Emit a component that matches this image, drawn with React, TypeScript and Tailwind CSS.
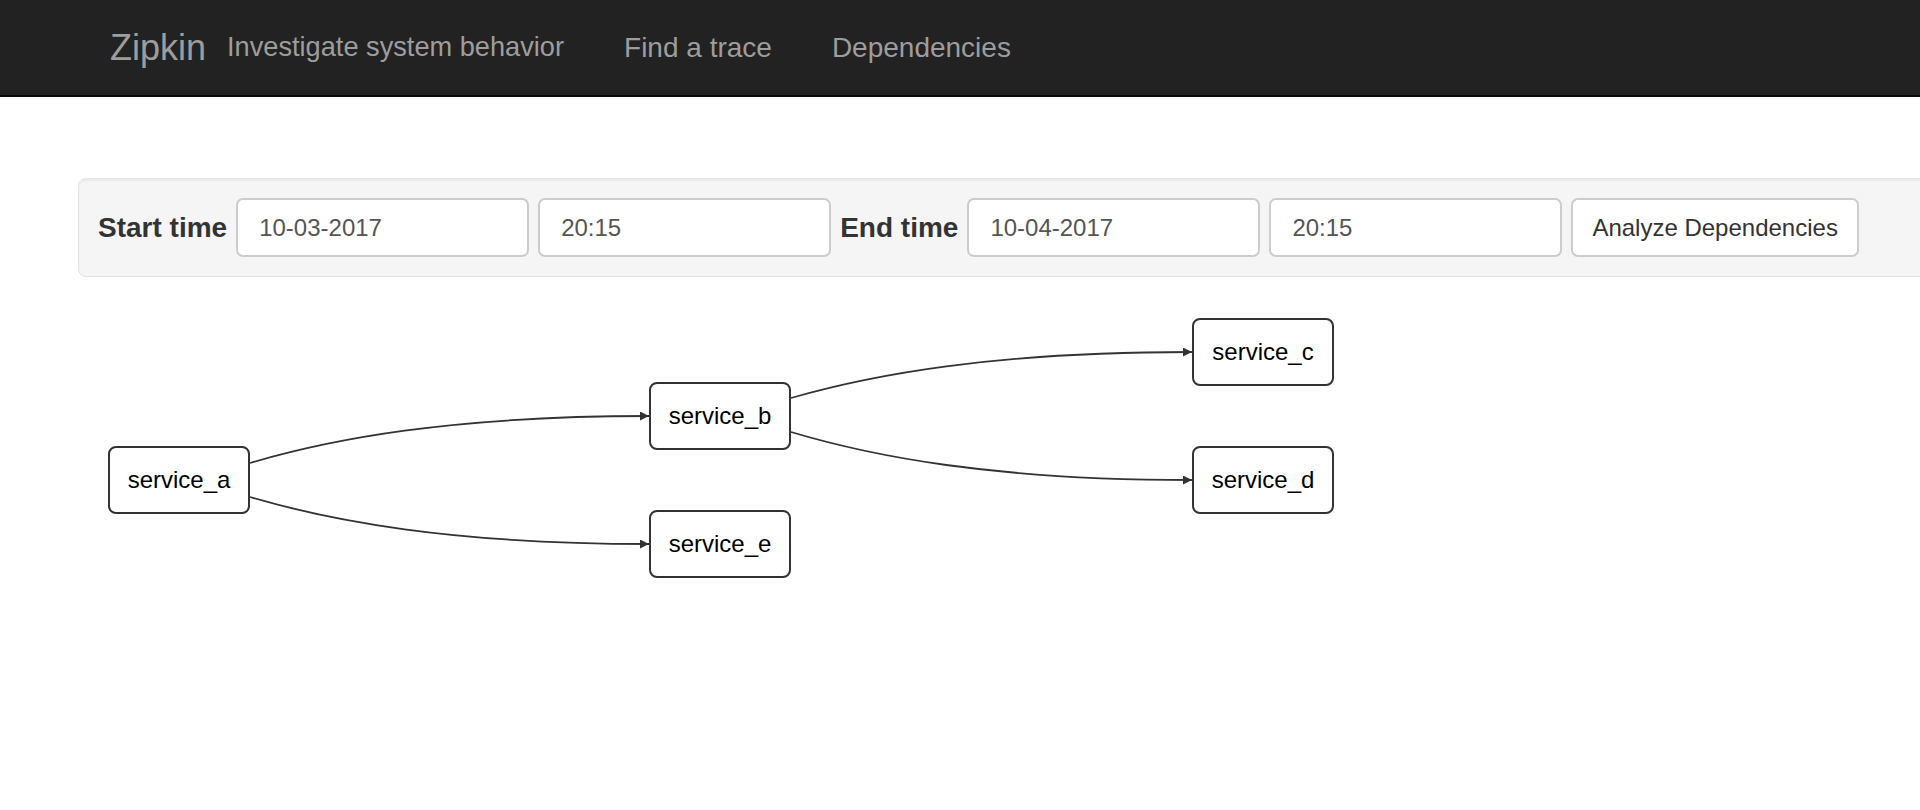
const font = { fontFamily: '"Liberation Sans", Arial, Helvetica, sans-serif' };

type Node = { id: string; x: number; y: number };

// diagram canvas: node boxes are 142x68, coordinates relative to the canvas
const nodes: Node[] = [
  { id: "service_a", x: 108, y: 169 },
  { id: "service_b", x: 649, y: 105 },
  { id: "service_e", x: 649, y: 233 },
  { id: "service_c", x: 1192, y: 41 },
  { id: "service_d", x: 1192, y: 169 },
];

const edges = [
  { x0: 250, y0: 186, x1: 649, y1: 139 },
  { x0: 250, y0: 220, x1: 649, y1: 267 },
  { x0: 791, y0: 121, x1: 1192, y1: 75 },
  { x0: 791, y0: 155, x1: 1192, y1: 203 },
];

function edgePath(e: { x0: number; y0: number; x1: number; y1: number }) {
  const dx = e.x1 - e.x0;
  const dy = e.y1 - e.y0;
  return `M${e.x0},${e.y0} C${e.x0 + dx * 0.2},${e.y0 + dy * 0.5} ${e.x0 + dx * 0.5},${e.y1} ${e.x1},${e.y1}`;
}

function Field({ value }: { value: string }) {
  return (
    <div className="w-[293px] h-[59px] shrink-0 flex items-center pl-[21px] bg-white border-2 border-[#cccccc] rounded-[7px] text-[24px] text-[#555555]">
      {value}
    </div>
  );
}

export default function App() {
  return (
    <div className="min-h-screen bg-white overflow-hidden" style={font}>
      <nav className="h-[97px] bg-[#222222] border-b-2 border-[#080808] flex items-center pl-[110px] text-[#9d9d9d]">
        <span className="text-[36px]">Zipkin</span>
        <span className="text-[27.2px] ml-[21px]">Investigate system behavior</span>
        <a className="text-[28px] ml-[60px]">Find a trace</a>
        <a className="text-[28px] ml-[60px]">Dependencies</a>
      </nav>

      <div className="ml-[78px] mt-[81px] w-[1900px] h-[99px] bg-[#f5f5f5] border border-[#e3e3e3] rounded-[8px] shadow-[inset_0_2px_2px_rgba(0,0,0,0.05)] flex items-center gap-[9px] pl-[19px]">
        <label className="text-[28px] font-bold text-[#333333]">Start time</label>
        <Field value="10-03-2017" />
        <Field value="20:15" />
        <label className="text-[28px] font-bold text-[#333333]">End time</label>
        <Field value="10-04-2017" />
        <Field value="20:15" />
        <button className="h-[59px] px-[19px] bg-white border-2 border-[#cccccc] rounded-[7px] text-[24px] text-[#333333]">
          Analyze Dependencies
        </button>
      </div>

      <div className="relative h-[330px]">
        <svg className="absolute inset-0" width="1920" height="330">
          <defs>
            <marker id="arrow" viewBox="0 0 10 10" refX="10" refY="5" markerWidth="9" markerHeight="9" markerUnits="userSpaceOnUse" orient="auto">
              <path d="M0,0 L10,5 L0,10 z" fill="#333333" />
            </marker>
          </defs>
          {edges.map((e, i) => (
            <path key={i} d={edgePath(e)} fill="none" stroke="#333333" strokeWidth="1.8" markerEnd="url(#arrow)" />
          ))}
        </svg>
        {nodes.map((n) => (
          <div
            key={n.id}
            className="absolute w-[142px] h-[68px] flex items-center justify-center bg-white border-2 border-[#333333] rounded-[8px] text-[24px] text-black"
            style={{ left: n.x, top: n.y }}
          >
            {n.id}
          </div>
        ))}
      </div>
    </div>
  );
}
